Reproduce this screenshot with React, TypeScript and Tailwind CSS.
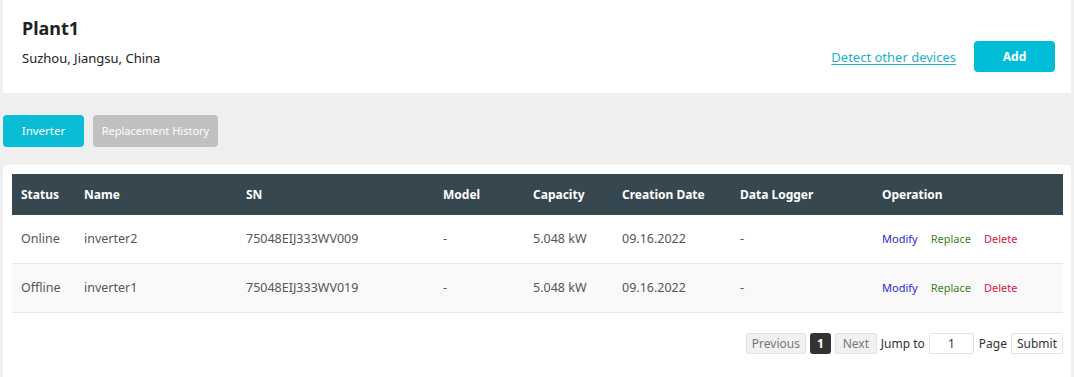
import React from "react";

const cols = "grid grid-cols-[63px_162px_197px_90px_89px_118px_142px_189px]";

const rows = [
  { status: "Online", name: "inverter2", sn: "75048EIJ333WV009", bg: "bg-white" },
  { status: "Offline", name: "inverter1", sn: "75048EIJ333WV019", bg: "bg-[#f9f9f9]" },
];

export default function App() {
  return (
    <div className="w-[1074px] h-[377px] bg-[#efefef] overflow-hidden font-['Noto_Sans',sans-serif] text-[#333]">
      <div className="mx-[3px] h-[93px] bg-white flex items-start justify-between pl-[19px] pr-[16px]">
        <div className="pt-[16px]">
          <div className="text-[18px] font-bold leading-[25px] text-[#222]">Plant1</div>
          <div className="mt-[8px] text-[13px] leading-[18px] text-[#222]">Suzhou, Jiangsu, China</div>
        </div>
        <div className="flex items-center mt-[41px]">
          <a className="text-[13px] text-[#1eb0cc] underline underline-offset-2 mr-[18px] mt-[3px]">Detect other devices</a>
          <button className="w-[81px] h-[31px] rounded-[4px] bg-[#00bcd6] text-white text-[12px] font-bold">Add</button>
        </div>
      </div>

      <div className="flex gap-[9px] mt-[22px] ml-[3px]">
        <button className="w-[81px] h-[32px] rounded-[4px] bg-[#0bbcd6] text-white text-[11.5px]">Inverter</button>
        <button className="w-[125px] h-[32px] rounded-[4px] bg-[#c0c0c0] text-white text-[11px]">Replacement History</button>
      </div>

      <div className="mx-[3px] mt-[18px] h-[220px] bg-white rounded-t-[4px] pt-[9px] pl-[9px] pr-[8px]">
        <div className={`${cols} h-[41px] items-center bg-[#37474f] text-white text-[12px] font-bold`}>
          <div className="pl-[9px]">Status</div>
          <div className="pl-[9px]">Name</div>
          <div className="pl-[9px]">SN</div>
          <div className="pl-[9px]">Model</div>
          <div className="pl-[9px]">Capacity</div>
          <div className="pl-[9px]">Creation Date</div>
          <div className="pl-[9px]">Data Logger</div>
          <div className="pl-[9px]">Operation</div>
        </div>
        {rows.map((r) => (
          <div key={r.name} className={`${cols} h-[49px] items-center border-b border-[#e6e6e6] text-[12.5px] text-[#555] ${r.bg}`}>
            <div className="pl-[9px]">{r.status}</div>
            <div className="pl-[9px]">{r.name}</div>
            <div className="pl-[9px]">{r.sn}</div>
            <div className="pl-[9px]">-</div>
            <div className="pl-[9px]">5.048 kW</div>
            <div className="pl-[9px]">09.16.2022</div>
            <div className="pl-[9px]">-</div>
            <div className="pl-[9px] flex gap-[13px] text-[11px]">
              <span className="text-[#2a2acc]">Modify</span>
              <span className="text-[#3f7f1f]">Replace</span>
              <span className="text-[#e0143c]">Delete</span>
            </div>
          </div>
        ))}
        <div className="flex justify-end items-center mt-[20px] text-[12px] gap-[4px]">
          <button className="h-[21px] w-[60px] border border-[#e2e2e2] bg-[#f1f1f1] text-[#777] rounded-[2px]">Previous</button>
          <button className="h-[21px] w-[21px] bg-[#333] text-white font-bold rounded-[3px]">1</button>
          <button className="h-[21px] w-[42px] border border-[#e2e2e2] bg-[#f1f1f1] text-[#777] rounded-[2px]">Next</button>
          <span className="text-[#333]">Jump to</span>
          <div className="h-[21px] w-[45px] border border-[#e2e2e2] rounded-[2px] bg-white flex items-center justify-center text-[#333]">1</div>
          <span className="text-[#333] ml-[1px]">Page</span>
          <button className="h-[21px] w-[52px] border border-[#e2e2e2] bg-white text-[#333] rounded-[2px]">Submit</button>
        </div>
      </div>
    </div>
  );
}
